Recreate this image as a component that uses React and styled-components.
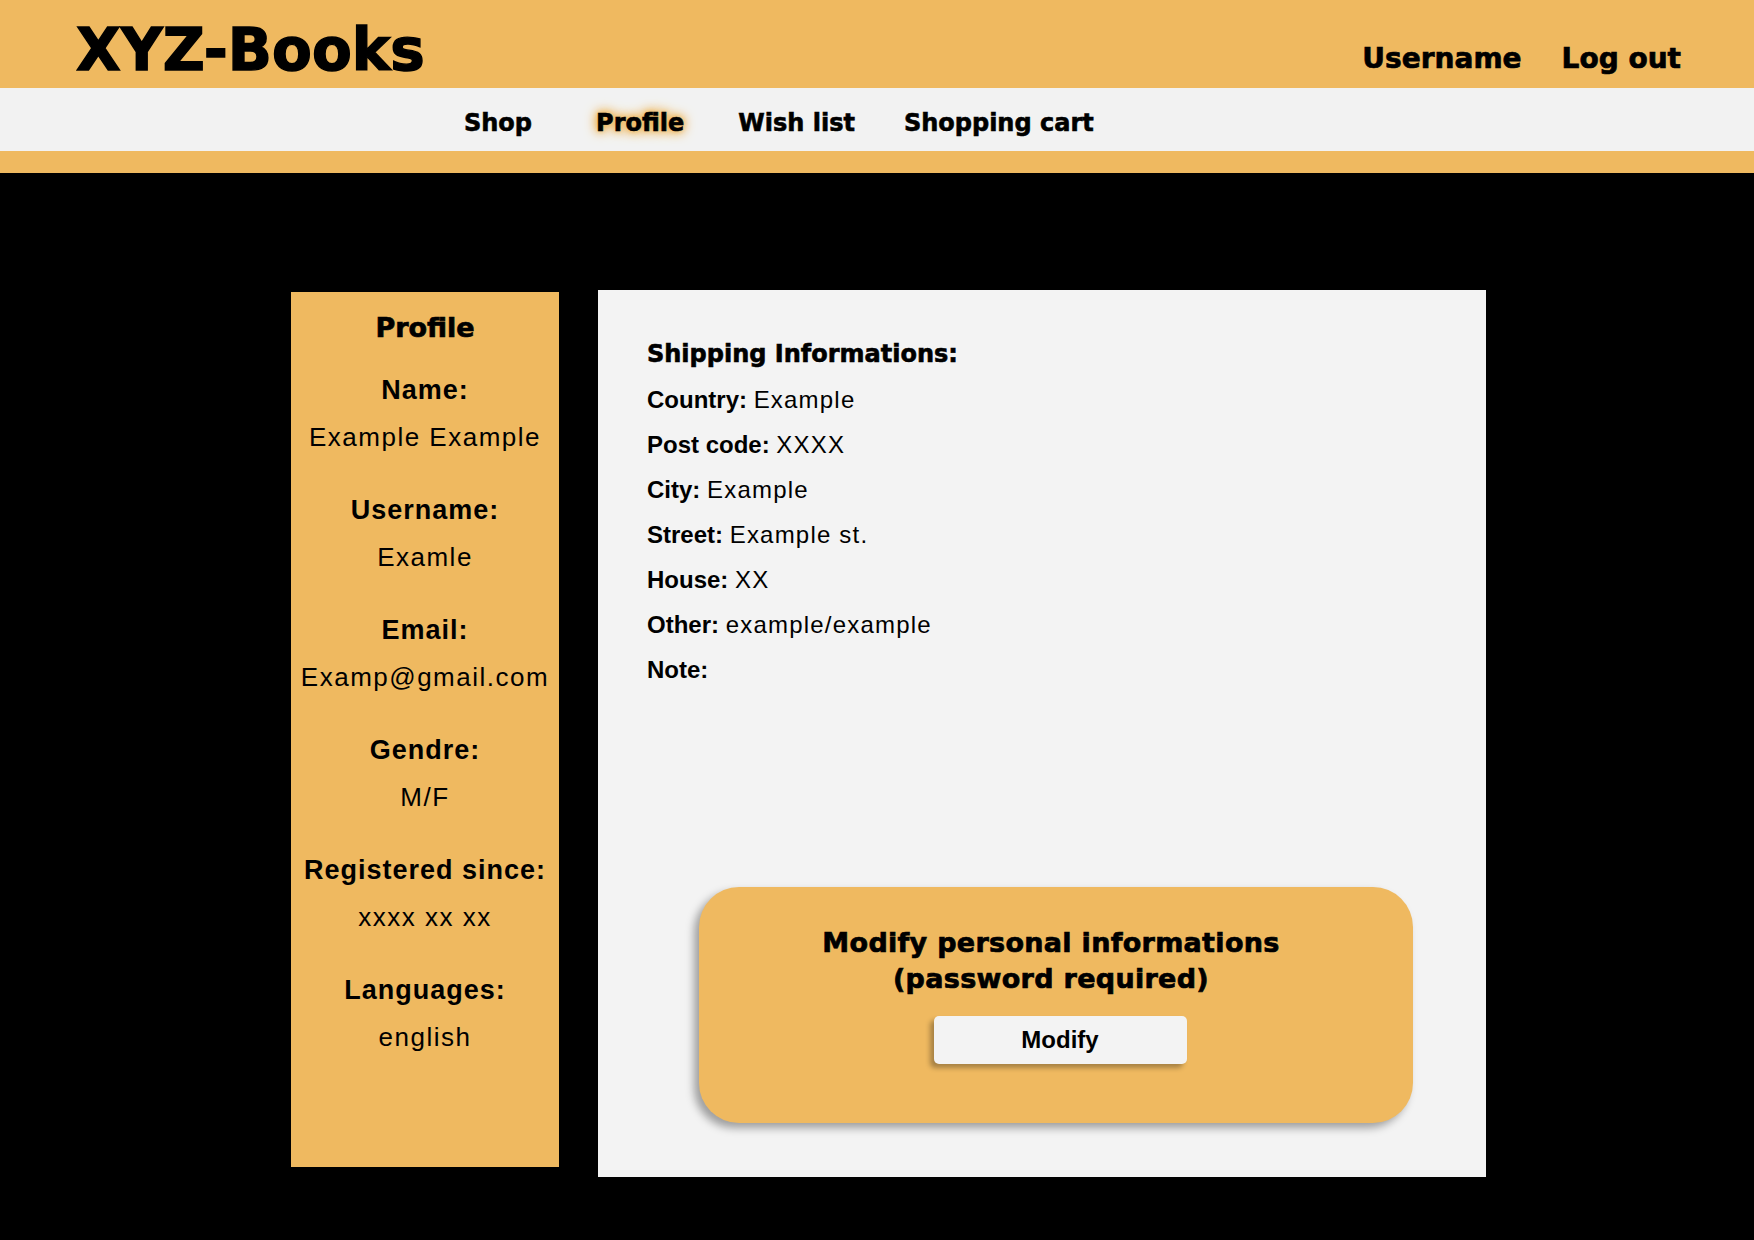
import styled, { createGlobalStyle } from "styled-components";

// #efb960 orange
// #f2f2f2 light grey

const GlobalStyle = createGlobalStyle`
  body {
    margin: 0;
    background-color: #000;
    font-family: "Liberation Sans", Arial, sans-serif;
  }
`;

const Page = styled.div`
  min-height: 1240px;
  background-color: #000;
`;

const StyledHeader = styled.header`
  height: 88px;
  box-sizing: border-box;
  background-color: #efb960;
  display: flex;
  justify-content: space-between;
  align-items: flex-start;
  padding: 0 73px 0 76px;
`;

const Logo = styled.a`
  font-family: "DejaVu Sans", sans-serif;
  font-weight: 700;
  font-size: 58px;
  line-height: 1;
  padding-top: 21px;
  color: #000;
  text-decoration: none;
  -webkit-text-stroke: 1.4px #000;
`;

const UserMenu = styled.div`
  display: flex;
  gap: 40px;
  padding-top: 45px;
`;

const UserLink = styled.a`
  font-family: "DejaVu Sans", sans-serif;
  font-weight: 700;
  font-size: 28px;
  line-height: 1;
  color: #000;
  text-decoration: none;
  -webkit-text-stroke: 0.7px #000;
`;

const NavBar = styled.nav`
  height: 63px;
  box-sizing: border-box;
  background-color: #f2f2f2;
  display: flex;
  align-items: center;
  gap: 49px;
  padding: 7px 0 0 464px;
`;

const NavLink = styled.a`
  font-family: "DejaVu Sans", sans-serif;
  font-weight: 700;
  font-size: 24px;
  line-height: 1;
  color: #000;
  text-decoration: none;
  -webkit-text-stroke: 0.6px #000;
  ${(props) =>
    props.active
      ? `
    margin: 0 5px 0 15px;
    text-shadow: 0 0 4px #efb960, 0 0 8px #efb960, 0 0 12px #efb960, 0 0 14px #efb960;
  `
      : ``}
`;

const Stripe = styled.div`
  height: 22px;
  background-color: #efb960;
`;

const Content = styled.main`
  display: flex;
  align-items: flex-start;
  gap: 39px;
  padding: 117px 0 0 291px;
`;

const Sidebar = styled.aside`
  width: 268px;
  height: 875px;
  margin-top: 2px;
  box-sizing: border-box;
  padding-top: 16px;
  background-color: #efb960;
  text-align: center;
  display: flex;
  flex-direction: column;
`;

const SidebarTitle = styled.h2`
  margin: 0 0 19px;
  font-family: "DejaVu Sans", sans-serif;
  font-weight: 700;
  font-size: 27px;
  line-height: 40px;
  -webkit-text-stroke: 0.7px #000;
`;

const Field = styled.div`
  margin-bottom: 26px;
`;

const FieldLabel = styled.div`
  font-weight: 700;
  font-size: 27px;
  line-height: 47px;
  letter-spacing: 1px;
`;

const FieldValue = styled.div`
  font-size: 26px;
  line-height: 47px;
  letter-spacing: 1.5px;
  white-space: nowrap;
`;

const Panel = styled.section`
  width: 888px;
  height: 887px;
  box-sizing: border-box;
  padding: 42px 0 54px 49px;
  background-color: #f3f3f3;
  display: flex;
  flex-direction: column;
`;

const PanelTitle = styled.h3`
  margin: 0;
  font-family: "DejaVu Sans", sans-serif;
  font-weight: 700;
  font-size: 24px;
  line-height: 45px;
  -webkit-text-stroke: 0.6px #000;
`;

const Row = styled.div`
  font-size: 24px;
  line-height: 45px;
`;

const RowLabel = styled.span`
  font-weight: 700;
`;

const RowValue = styled.span`
  letter-spacing: 1.2px;
`;

const ModifyCard = styled.div`
  margin-top: auto;
  margin-left: 52px;
  width: 714px;
  height: 236px;
  box-sizing: border-box;
  padding-top: 38px;
  border-radius: 40px;
  background-color: #efb960;
  box-shadow: -5px 5px 9px rgba(0, 0, 0, 0.35);
  display: flex;
  flex-direction: column;
  align-items: center;
`;

const CardTitle = styled.p`
  margin: 0 0 19px 0;
  padding-right: 10px;
  font-family: "DejaVu Sans", sans-serif;
  font-weight: 700;
  font-size: 27px;
  line-height: 36px;
  letter-spacing: 0.3px;
  text-align: center;
  -webkit-text-stroke: 0.7px #000;
`;

const ModifyButton = styled.button`
  width: 253px;
  height: 48px;
  margin-left: 8px;
  border: 0;
  border-radius: 5px;
  background-color: #f3f3f3;
  box-shadow: -4px 4px 5px rgba(0, 0, 0, 0.3);
  font-family: "Liberation Sans", Arial, sans-serif;
  font-weight: 700;
  font-size: 24px;
  color: #000;
  cursor: pointer;
`;

const profileFields = [
  { label: "Name:", value: "Example Example" },
  { label: "Username:", value: "Examle" },
  { label: "Email:", value: "Examp@gmail.com" },
  { label: "Gendre:", value: "M/F" },
  { label: "Registered since:", value: "xxxx xx xx" },
  { label: "Languages:", value: "english" },
];

const shippingRows = [
  { label: "Country:", value: "Example" },
  { label: "Post code:", value: "XXXX" },
  { label: "City:", value: "Example" },
  { label: "Street:", value: "Example st." },
  { label: "House:", value: "XX" },
  { label: "Other:", value: "example/example" },
  { label: "Note:", value: "" },
];

export default function App() {
  return (
    <Page>
      <GlobalStyle />
      <StyledHeader>
        <Logo href="#">XYZ-Books</Logo>
        <UserMenu>
          <UserLink href="#">Username</UserLink>
          <UserLink href="#">Log out</UserLink>
        </UserMenu>
      </StyledHeader>
      <NavBar>
        <NavLink href="#">Shop</NavLink>
        <NavLink href="#" active>
          Profile
        </NavLink>
        <NavLink href="#">Wish list</NavLink>
        <NavLink href="#">Shopping cart</NavLink>
      </NavBar>
      <Stripe />
      <Content>
        <Sidebar>
          <SidebarTitle>Profile</SidebarTitle>
          {profileFields.map((f) => (
            <Field key={f.label}>
              <FieldLabel>{f.label}</FieldLabel>
              <FieldValue>{f.value}</FieldValue>
            </Field>
          ))}
        </Sidebar>
        <Panel>
          <PanelTitle>Shipping Informations:</PanelTitle>
          {shippingRows.map((r) => (
            <Row key={r.label}>
              <RowLabel>{r.label}</RowLabel> <RowValue>{r.value}</RowValue>
            </Row>
          ))}
          <ModifyCard>
            <CardTitle>
              Modify personal informations
              <br />
              (password required)
            </CardTitle>
            <ModifyButton>Modify</ModifyButton>
          </ModifyCard>
        </Panel>
      </Content>
    </Page>
  );
}
